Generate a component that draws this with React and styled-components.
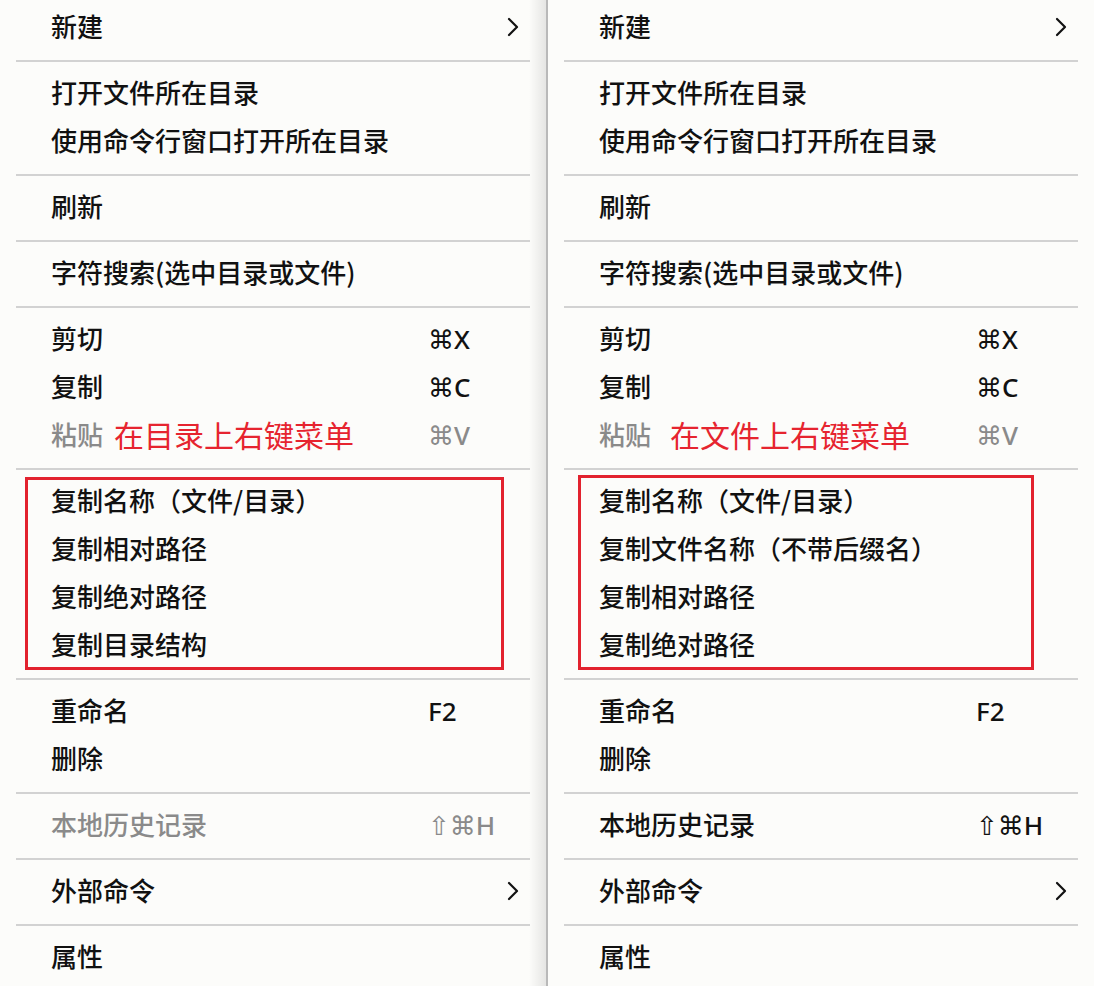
import React from "react";
import styled, { createGlobalStyle } from "styled-components";

const GlobalStyle = createGlobalStyle`
  html, body { margin: 0; padding: 0; background: #fcfcfa; }
  body { font-family: "Noto Sans CJK SC", "Noto Sans", sans-serif; }
`;

const Page = styled.div`
  display: flex;
  width: 1094px;
  height: 986px;
  overflow: hidden;
  background: #fcfcfa;
`;

const Menu = styled.div`
  position: relative;
  box-sizing: border-box;
  width: ${(p) => p.$width}px;
  flex: none;
  padding-top: 4px;
  border-right: ${(p) => (p.$edge ? "2px solid #b9b9b9" : "none")};
  &::after {
    content: "";
    display: ${(p) => (p.$edge ? "block" : "none")};
    position: absolute;
    top: 0;
    bottom: 0;
    right: 0;
    width: 17px;
    background: linear-gradient(to right, rgba(0, 0, 0, 0), rgba(0, 0, 0, 0.09));
    pointer-events: none;
  }
`;

const Item = styled.div`
  display: grid;
  grid-template-columns: 377px 1fr;
  align-items: center;
  height: 48px;
  padding: 0 26px 0 51px;
  color: ${(p) => (p.$disabled ? "#8a8a8a" : "#111")};
`;

const Label = styled.span`
  display: flex;
  align-items: center;
  padding-bottom: 4px;
  font-family: "Noto Sans CJK SC", sans-serif;
  font-size: 26px;
  font-weight: 500;
  white-space: nowrap;
  line-height: 1;
`;

const Note = styled.span`
  margin-left: ${(p) => p.$gap}px;
  font-family: "Noto Sans CJK SC", sans-serif;
  font-size: 30px;
  font-weight: 400;
  color: #e6242f;
`;

const Shortcut = styled.span`
  padding-bottom: 3px;
  font-family: "Noto Sans", "DejaVu Sans", sans-serif;
  font-size: 26px;
  font-weight: 500;
  white-space: nowrap;
  line-height: 1;
`;

const ChevronBox = styled.span`
  justify-self: end;
  display: flex;
  align-items: center;
  padding-bottom: 3px;
`;

const Separator = styled.div`
  height: 2px;
  margin: 8px 16px;
  background: #d2d2d2;
`;

const Boxed = styled.div`
  position: relative;
  &::after {
    content: "";
    position: absolute;
    top: ${(p) => p.$top}px;
    bottom: 0;
    left: ${(p) => p.$left}px;
    width: ${(p) => p.$width}px;
    border: 3px solid #e2222e;
    box-sizing: border-box;
    pointer-events: none;
  }
`;

const Chevron = () => (
  <ChevronBox>
    <svg width="14" height="20" viewBox="0 0 14 20" fill="none">
      <path d="M3 2 L11 10 L3 18" stroke="#111" strokeWidth="2.2" strokeLinecap="round" strokeLinejoin="round" />
    </svg>
  </ChevronBox>
);

const Row = ({ label, shortcut, sub, disabled, note, noteGap }) => (
  <Item $disabled={disabled}>
    <Label>
      {label}
      {note && <Note $gap={noteGap}>{note}</Note>}
    </Label>
    {sub ? <Chevron /> : shortcut ? <Shortcut>{shortcut}</Shortcut> : <span />}
  </Item>
);

const ContextMenu = ({ width, edge, note, noteGap, boxItems, box, historyDisabled }) => (
  <Menu $width={width} $edge={edge}>
    <Row label="新建" sub />
    <Separator />
    <Row label="打开文件所在目录" />
    <Row label="使用命令行窗口打开所在目录" />
    <Separator />
    <Row label="刷新" />
    <Separator />
    <Row label="字符搜索(选中目录或文件)" />
    <Separator />
    <Row label="剪切" shortcut="⌘X" />
    <Row label="复制" shortcut="⌘C" />
    <Row label="粘贴" shortcut="⌘V" disabled note={note} noteGap={noteGap} />
    <Separator />
    <Boxed $left={box.left} $width={box.width} $top={box.top}>
      {boxItems.map((t) => (
        <Row key={t} label={t} />
      ))}
    </Boxed>
    <Separator />
    <Row label="重命名" shortcut="F2" />
    <Row label="删除" />
    <Separator />
    <Row label="本地历史记录" shortcut="⇧⌘H" disabled={historyDisabled} />
    <Separator />
    <Row label="外部命令" sub />
    <Separator />
    <Row label="属性" />
  </Menu>
);

export default function App() {
  return (
    <>
      <GlobalStyle />
      <Page>
        <ContextMenu
          width={548}
          edge
          note="在目录上右键菜单"
          noteGap={11}
          historyDisabled
          box={{ left: 25, width: 479, top: -1 }}
          boxItems={["复制名称（文件/目录）", "复制相对路径", "复制绝对路径", "复制目录结构"]}
        />
        <ContextMenu
          width={546}
          note="在文件上右键菜单"
          noteGap={19}
          box={{ left: 30, width: 456, top: -3 }}
          boxItems={["复制名称（文件/目录）", "复制文件名称（不带后缀名）", "复制相对路径", "复制绝对路径"]}
        />
      </Page>
    </>
  );
}
